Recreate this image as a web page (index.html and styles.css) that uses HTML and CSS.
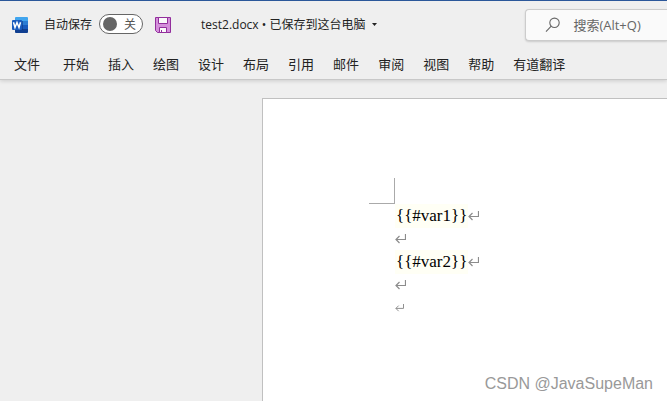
FILE: index.html
```html
<!DOCTYPE html>
<html lang="zh-CN">
<head>
    <meta charset="UTF-8">
    <meta name="viewport" content="width=device-width, initial-scale=1.0">
    <title>test2.docx - Word</title>
    <link rel="stylesheet" href="styles.css">
</head>
<body>
    <header class="ribbon">
        <div class="titlebar">
            <svg class="word-logo" width="16" height="16" viewBox="0 0 16 16" aria-hidden="true">
                <path fill="#41a5ee" d="M4 0h11a1 1 0 0 1 1 1v3H3V1a1 1 0 0 1 1-1z"/>
                <path fill="#2b7cd3" d="M3 4h13v4H3z"/>
                <path fill="#185abd" d="M3 8h13v4H3z"/>
                <path fill="#103f91" d="M3 12h13v3a1 1 0 0 1-1 1H4a1 1 0 0 1-1-1z"/>
                <path fill="#0b2f73" opacity=".5" d="M3 4h8v9H3z"/>
                <rect fill="#185abd" y="3" width="10" height="10" rx="1"/>
                <path fill="none" stroke="#fff" stroke-width="1.500" d="M1.500 5.300l1.500 5.200L5 5.500l2 5 1.500-5.200"/>
            </svg>
            <label class="autosave-label" for="autosave">自动保存</label>
            <label class="toggle">
                <input type="checkbox" id="autosave">
                <span>关</span>
            </label>
            <button class="save" type="button" aria-label="保存">
                <svg width="16" height="16" viewBox="0 0 16 16">
                    <path fill="#d48fdb" stroke="#922e9c" d="M.5.5h15v15h-13l-2-2z"/>
                    <path fill="#fafafa" stroke="#922e9c" d="M3.500.5h9v6h-9zM4.500 15.500v-5h7v5z"/>
                    <path stroke="#922e9c" d="M6.500 13v2.500"/>
                </svg>
            </button>
            <button class="doc-title" type="button">
                <span>test2.docx • 已保存到这台电脑</span>
                <svg width="5" height="3" viewBox="0 0 5 3" aria-hidden="true"><path fill="#222" d="M0 0h5L2.500 3z"/></svg>
            </button>
            <div class="search">
                <svg width="16" height="16" viewBox="0 0 16 16" aria-hidden="true">
                    <g fill="none" stroke="#666" stroke-width="1.1">
                        <circle cx="9.500" cy="5.800" r="4.700"/>
                        <path d="M6.200 9.200L1 14.700"/>
                    </g>
                </svg>
                <input type="text" placeholder="搜索(Alt+Q)" aria-label="搜索">
            </div>
        </div>
        <nav class="tabs">
            <button class="file-tab" type="button">文件</button>
            <button type="button">开始</button>
            <button type="button">插入</button>
            <button type="button">绘图</button>
            <button type="button">设计</button>
            <button type="button">布局</button>
            <button type="button">引用</button>
            <button type="button">邮件</button>
            <button type="button">审阅</button>
            <button type="button">视图</button>
            <button type="button">帮助</button>
            <button type="button">有道翻译</button>
        </nav>
    </header>

    <svg class="symbols" aria-hidden="true">
        <symbol id="return" viewBox="0 0 11 10">
            <path fill="none" stroke="#8c8c8c" stroke-width="1.2" d="M10.500 0v5.500H1M4.500 2L1 5.500 4.500 9"/>
        </symbol>
    </svg>

    <main class="workspace">
        <article class="page">
            <div class="margin-corner"></div>
            <p><span class="field">{{#var1}}</span><svg class="mark"><use href="#return"/></svg></p>
            <p><svg class="mark"><use href="#return"/></svg></p>
            <p><span class="field">{{#var2}}</span><svg class="mark"><use href="#return"/></svg></p>
            <p><svg class="mark"><use href="#return"/></svg></p>
            <p><svg class="mark mark-small"><use href="#return"/></svg></p>
        </article>
    </main>
    <div class="watermark">CSDN @JavaSupeMan</div>
</body>
</html>
```

FILE: styles.css
```css
* {
    margin: 0;
    padding: 0;
    box-sizing: border-box;
}

body {
    display: flex;
    flex-direction: column;
    height: 100vh;
    overflow: hidden;
    background: #efefef;
    color: #222;
    font-family: "Open Sans", "Noto Sans CJK SC", sans-serif;
    font-size: 12px;
}

button {
    border: none;
    background: none;
    color: inherit;
    font: inherit;
    white-space: nowrap;
}

.ribbon {
    border-top: 1px solid #2b579a;
    border-bottom: 1px solid #c8c8c8;
    box-shadow: 0 1px 4px rgba(0, 0, 0, 0.15);
}

.titlebar {
    display: flex;
    align-items: center;
    height: 46px;
    padding-left: 12px;
}

.titlebar > * {
    flex-shrink: 0;
}

.word-logo {
    margin-top: 2px;
}

.autosave-label {
    margin: 0 7px 0 16px;
}

.toggle {
    display: flex;
    align-items: center;
    gap: 7px;
    width: 44px;
    height: 20px;
    padding-left: 3px;
    border: 1px solid #666;
    border-radius: 10px;
    background: #fff;
    color: #555;
}

.toggle input {
    appearance: none;
    width: 14px;
    height: 14px;
    border-radius: 50%;
    background: #666;
}

.save {
    display: flex;
    margin: 2px 30px 0 12px;
}

.doc-title {
    display: flex;
    align-items: center;
    gap: 7px;
}

.titlebar .search {
    display: flex;
    flex: 1 1 0;
    align-items: center;
    gap: 12px;
    min-width: 0;
    height: 32px;
    margin: 2px 0 0 148px;
    padding-left: 19px;
    border: 1px solid #ccc;
    border-right: none;
    border-radius: 4px 0 0 4px;
    background: #fafafa;
    box-shadow: 0 1px 2px rgba(0, 0, 0, 0.15);
}

.search svg {
    flex-shrink: 0;
}

.search input {
    flex: 1;
    min-width: 0;
    border: none;
    outline: none;
    background: none;
    font-family: inherit;
    font-size: 13px;
}

.search input::placeholder {
    color: #666;
}

.tabs {
    display: flex;
    gap: 19px;
    height: 32px;
    padding-left: 14px;
    font-size: 13px;
}

.file-tab {
    margin-right: 4px;
}

.symbols {
    position: absolute;
    width: 0;
    height: 0;
}

.workspace {
    display: flex;
    flex: 1;
    padding: 18px 0 0 262px;
}

.page {
    flex: 1;
    padding: 79px 0 0 132px;
    border: 1px solid #c0c0c0;
    border-width: 1px 0 0 1px;
    background: #fff;
    color: #000;
    font-family: "Liberation Serif", serif;
    font-size: 17px;
    line-height: 24px;
}

.margin-corner {
    width: 26px;
    height: 26px;
    margin-left: -26px;
    border: 1px solid #aaa;
    border-width: 0 1px 1px 0;
}

.page p {
    display: flex;
    align-items: center;
    height: 23px;
}

.field {
    padding: 0 1px;
    background: #fffff5;
}

.mark {
    width: 11px;
    height: 10px;
}

.mark-small {
    width: 9px;
    height: 8px;
}

.watermark {
    position: absolute;
    right: 14px;
    bottom: 8px;
    color: #999;
    font-family: "Liberation Sans", sans-serif;
    font-size: 16px;
}
```
